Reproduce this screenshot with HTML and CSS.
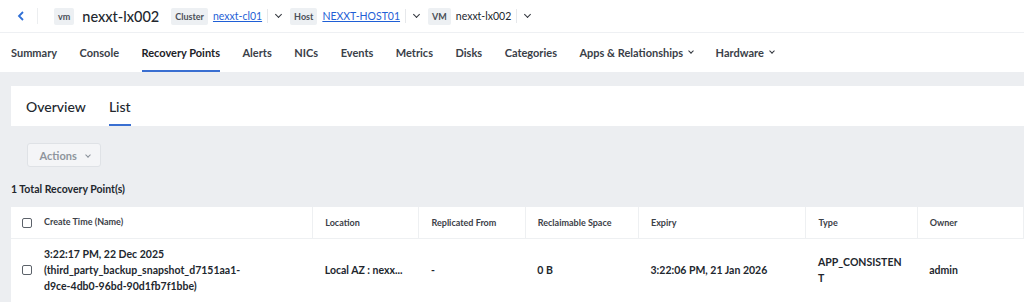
FILE: index.html
```html
<!DOCTYPE html>
<html>
  <head>
    <title>nexxt-lx002 - Recovery Points</title>
    <link rel="stylesheet" href="styles.css">
  </head>
  <body>
    <div class="top-bar">
      <span class="back">
        <svg width="8" height="10" viewBox="0 0 8 10"><path d="M6 1 L2 5 L6 9" fill="none" stroke="#2f6fd6" stroke-width="1.8"/></svg>
      </span>
      <span class="badge">vm</span>
      <span class="entity-name">nexxt-lx002</span>
      <div class="crumb">
        <span class="badge">Cluster</span>
        <a class="crumb-link">nexxt-cl01</a>
        <span class="crumb-sep"></span>
        <span class="caret"></span>
      </div>
      <div class="crumb">
        <span class="badge">Host</span>
        <a class="crumb-link">NEXXT-HOST01</a>
        <span class="crumb-sep"></span>
        <span class="caret"></span>
      </div>
      <div class="crumb">
        <span class="badge">VM</span>
        <span class="crumb-text">nexxt-lx002</span>
        <span class="crumb-sep"></span>
        <span class="caret"></span>
      </div>
    </div>

    <div class="tabs">
      <span class="tab">Summary</span>
      <span class="tab">Console</span>
      <span class="tab active">Recovery Points</span>
      <span class="tab">Alerts</span>
      <span class="tab">NICs</span>
      <span class="tab">Events</span>
      <span class="tab">Metrics</span>
      <span class="tab">Disks</span>
      <span class="tab">Categories</span>
      <span class="tab">Apps &amp; Relationships <span class="caret small"></span></span>
      <span class="tab">Hardware <span class="caret small"></span></span>
    </div>

    <div class="content">
      <div class="sub-tabs">
        <span class="sub-tab">Overview</span>
        <span class="sub-tab active">List</span>
      </div>

      <div class="toolbar">
        <button class="actions-btn">Actions <span class="caret small grey"></span></button>
      </div>

      <div class="total">1 Total Recovery Point(s)</div>

      <table class="rp-table">
        <thead>
          <tr>
            <th class="col-name"><span class="check"></span>Create Time (Name)</th>
            <th class="col-loc">Location</th>
            <th class="col-rep">Replicated From</th>
            <th class="col-space">Reclaimable Space</th>
            <th class="col-exp">Expiry</th>
            <th class="col-type">Type</th>
            <th class="col-owner">Owner</th>
          </tr>
        </thead>
        <tbody>
          <tr>
            <td class="col-name">
              <div class="name-cell">
                <span class="check"></span>
                <span>3:22:17 PM, 22 Dec 2025<br>(third_party_backup_snapshot_d7151aa1-<br>d9ce-4db0-96bd-90d1fb7f1bbe)</span>
              </div>
            </td>
            <td class="nowrap">Local AZ : nexx...</td>
            <td>-</td>
            <td>0 B</td>
            <td>3:22:06 PM, 21 Jan 2026</td>
            <td>APP_CONSISTEN<br>T</td>
            <td>admin</td>
          </tr>
        </tbody>
      </table>
    </div>
  </body>
</html>
```

FILE: styles.css
```css
* {
  box-sizing: border-box;
}
body {
  margin: 0;
  font-family: "Lato", "Liberation Sans", sans-serif;
  color: #22272e;
  background: #eceef1;
  overflow: hidden;
}
.top-bar {
  height: 33px;
  background: #fff;
  display: flex;
  align-items: center;
  border-bottom: 1px solid #eef0f3;
}
.back {
  width: 38px;
  height: 16px;
  display: flex;
  align-items: center;
  justify-content: center;
  border-right: 1px solid #eceef0;
  margin-right: 16px;
  padding-left: 4px;
}
.badge {
  display: inline-flex;
  align-items: center;
  height: 17px;
  padding: 0 4px;
  background: #edf0f3;
  border-radius: 2px;
  font-size: 9px;
  font-weight: 700;
  color: #4a4f57;
}
.entity-name {
  font-size: 14.5px;
  font-weight: 500;
  margin-left: 8px;
  margin-right: 12px;
}
.crumb {
  display: flex;
  align-items: center;
}
.crumb-link {
  margin-left: 5px;
  font-size: 10.5px;
  color: #1f5fd6;
  text-decoration: underline;
}
.crumb-text {
  margin-left: 5px;
  font-size: 10.5px;
}
.crumb-sep {
  width: 1px;
  height: 14px;
  background: #e6e8eb;
  margin-left: 5px;
}
.caret {
  display: inline-block;
  width: 5px;
  height: 5px;
  border-right: 1.5px solid #30353c;
  border-bottom: 1.5px solid #30353c;
  transform: rotate(45deg);
  margin: -3px 9px 0 8px;
}
.caret.small {
  width: 4px;
  height: 4px;
  border-width: 1.2px;
  margin: -3px 0 0 6px;
  vertical-align: middle;
}
.caret.grey {
  border-color: #8a9099;
  margin-left: 7px;
}
.tabs {
  height: 39px;
  background: #fff;
  display: flex;
  gap: 22.5px;
  padding-left: 11px;
}
.tab {
  font-size: 11px;
  font-weight: 700;
  color: #3a4048;
  display: flex;
  align-items: center;
  border-bottom: 2px solid transparent;
  padding-top: 2px;
}
.tab.active {
  color: #1c2127;
  border-bottom-color: #3a6fd1;
}
.content {
  padding: 14px 0 0 11px;
}
.sub-tabs {
  height: 40px;
  background: #fff;
  display: flex;
  gap: 23px;
  padding-left: 15px;
}
.sub-tab {
  font-size: 14px;
  font-weight: 500;
  color: #22272e;
  display: flex;
  align-items: center;
  border-bottom: 2px solid transparent;
  padding-top: 2px;
}
.sub-tab.active {
  border-bottom-color: #3a6fd1;
}
.toolbar {
  padding: 17px 0 0 16px;
  height: 57px;
}
.actions-btn {
  height: 24px;
  width: 74px;
  background: #f4f5f7;
  border: 1px solid #dfe2e6;
  border-radius: 3px;
  font-family: inherit;
  font-size: 11px;
  font-weight: 700;
  color: #8f959d;
  padding: 0 0 0 2px;
}
.total {
  font-size: 10.5px;
  font-weight: 700;
  height: 24px;
}
.rp-table {
  width: 100%;
  border-collapse: collapse;
  background: #fff;
  table-layout: fixed;
}
.rp-table th {
  height: 31px;
  text-align: left;
  font-size: 9px;
  font-weight: 700;
  color: #3c4148;
  padding: 0 12px;
  border-right: 1px solid #eef0f2;
  border-bottom: 1px solid #eef0f2;
}
.rp-table td {
  height: 64px;
  font-size: 10.5px;
  font-weight: 700;
  line-height: 16px;
  padding: 0 12px;
  vertical-align: middle;
}
.rp-table th.col-name,
.rp-table td.col-name {
  padding-left: 11px;
}
.rp-table td.nowrap {
  white-space: nowrap;
}
.col-name { width: 301px; }
.col-loc { width: 106px; }
.col-rep { width: 106px; }
.col-space { width: 113px; }
.col-exp { width: 167px; }
.col-type { width: 111px; }
.col-owner { width: 106px; }
.check {
  display: inline-block;
  width: 10px;
  height: 10px;
  border: 1px solid #5c626a;
  border-radius: 2px;
  margin-right: 12px;
  vertical-align: middle;
}
.name-cell {
  display: flex;
  align-items: center;
}
.name-cell .check {
  flex: none;
}
```
